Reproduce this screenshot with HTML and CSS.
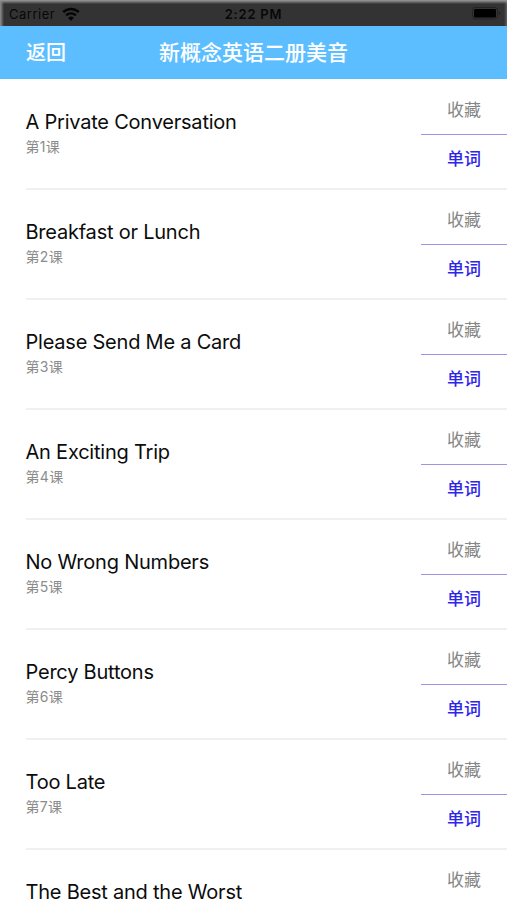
FILE: index.html
```html
<!DOCTYPE html>
<html lang="zh-CN">
<head>
  <meta charset="UTF-8">
  <meta name="viewport" content="width=device-width, initial-scale=1.0">
  <title>新概念英语二册美音</title>
  <link rel="stylesheet" href="styles.css">
</head>
<body>
  <div class="status-bar">
    <div class="carrier">
      <span>Carrier</span>
      <svg class="wifi" width="18" height="14" viewBox="0 0 18 14">
        <path d="M1.2 5.2a11.2 11.2 0 0 1 15.6 0" fill="none" stroke="#050505" stroke-width="2.5"/>
        <path d="M4.1 8.4a7 7 0 0 1 9.8 0" fill="none" stroke="#050505" stroke-width="2.3"/>
        <path d="M9 13.8L6.2 10.9a4 4 0 0 1 5.6 0z" fill="#050505"/>
      </svg>
    </div>
    <span class="time">2:22 PM</span>
    <div class="battery">
      <svg width="30" height="13" viewBox="0 0 30 13">
        <rect x="1.5" y="0.5" width="25" height="11.5" rx="2.5" fill="none" stroke="#242424"/>
        <rect x="3" y="2" width="22" height="8.5" rx="1.2" fill="#000"/>
        <path d="M27.8 4.2v4a2.1 2.1 0 0 0 0-4z" fill="#202020"/>
      </svg>
    </div>
  </div>

  <header class="nav-bar">
    <a class="back">返回</a>
    <h1 class="nav-title">新概念英语二册美音</h1>
  </header>

  <ul class="lesson-list">
    <li class="lesson">
      <div class="lesson-info">
        <h2>A Private Conversation</h2>
        <p>第1课</p>
      </div>
      <div class="lesson-actions">
        <a class="favorite">收藏</a>
        <a class="words">单词</a>
      </div>
    </li>
    <li class="lesson">
      <div class="lesson-info">
        <h2>Breakfast or Lunch</h2>
        <p>第2课</p>
      </div>
      <div class="lesson-actions">
        <a class="favorite">收藏</a>
        <a class="words">单词</a>
      </div>
    </li>
    <li class="lesson">
      <div class="lesson-info">
        <h2>Please Send Me a Card</h2>
        <p>第3课</p>
      </div>
      <div class="lesson-actions">
        <a class="favorite">收藏</a>
        <a class="words">单词</a>
      </div>
    </li>
    <li class="lesson">
      <div class="lesson-info">
        <h2>An Exciting Trip</h2>
        <p>第4课</p>
      </div>
      <div class="lesson-actions">
        <a class="favorite">收藏</a>
        <a class="words">单词</a>
      </div>
    </li>
    <li class="lesson">
      <div class="lesson-info">
        <h2>No Wrong Numbers</h2>
        <p>第5课</p>
      </div>
      <div class="lesson-actions">
        <a class="favorite">收藏</a>
        <a class="words">单词</a>
      </div>
    </li>
    <li class="lesson">
      <div class="lesson-info">
        <h2>Percy Buttons</h2>
        <p>第6课</p>
      </div>
      <div class="lesson-actions">
        <a class="favorite">收藏</a>
        <a class="words">单词</a>
      </div>
    </li>
    <li class="lesson">
      <div class="lesson-info">
        <h2>Too Late</h2>
        <p>第7课</p>
      </div>
      <div class="lesson-actions">
        <a class="favorite">收藏</a>
        <a class="words">单词</a>
      </div>
    </li>
    <li class="lesson lesson-last">
      <div class="lesson-info">
        <h2>The Best and the Worst</h2>
      </div>
      <div class="lesson-actions">
        <a class="favorite">收藏</a>
      </div>
    </li>
  </ul>
</body>
</html>
```
FILE: styles.css
```css
* {
  margin: 0;
  padding: 0;
  box-sizing: border-box;
}

body {
  height: 900px;
  display: flex;
  flex-direction: column;
  overflow: hidden;
  background: #fff;
  font-family: Inter, "Noto Sans CJK SC", sans-serif;
}

.status-bar {
  height: 26px;
  flex-shrink: 0;
  display: grid;
  grid-template-columns: 1fr auto 1fr;
  align-items: center;
  padding: 1px 6px 0 9px;
  background:
    linear-gradient(to bottom, #989898 0, #858585 1px, rgba(51, 51, 51, 0) 4px),
    linear-gradient(to right, #909090 0, rgba(51, 51, 51, 0) 4px),
    linear-gradient(to left, #606060 0, rgba(51, 51, 51, 0) 3px),
    #333;
  color: #080808;
  font-size: 13px;
  line-height: 20px;
}

.carrier {
  display: flex;
  align-items: center;
  gap: 7px;
  letter-spacing: 0.5px;
}

.time {
  margin-right: 3px;
  font-weight: 600;
  letter-spacing: 0.8px;
}

.battery {
  display: flex;
  justify-content: flex-end;
}

.nav-bar {
  height: 53px;
  flex-shrink: 0;
  display: grid;
  grid-template-columns: 1fr auto 1fr;
  align-items: center;
  padding: 0 26px;
  background: #5dbeff;
  color: #fff;
  font-size: 20px;
  font-weight: 500;
  line-height: 30px;
}

.nav-title {
  font-size: 21px;
  font-weight: 500;
}

.lesson-list {
  list-style: none;
}

.lesson {
  height: 110px;
  display: flex;
  justify-content: space-between;
  position: relative;
}

/* separator starts at the text inset */
.lesson::after {
  content: "";
  position: absolute;
  left: 26px;
  right: 0;
  bottom: -1px;
  height: 2px;
  background: #f0f0f0;
}

.lesson-last {
  height: 51px;
}

.lesson-last::after {
  display: none;
}

.lesson-info {
  padding: 30px 0 0 25.5px;
}

.lesson-info h2 {
  color: #0c0c0c;
  font-size: 20px;
  font-weight: 400;
  line-height: 27px;
  letter-spacing: -0.22px;
}

.lesson-last h2 {
  height: 21px;
}

.lesson-info p {
  color: #8c8c8c;
  font-size: 14px;
  line-height: 22px;
  letter-spacing: 0.3px;
}

.lesson-actions {
  width: 86px;
  font-size: 17px;
  text-align: center;
}

.lesson-actions a {
  display: block;
}

.favorite {
  height: 56px;
  padding-top: 7px;
  border-bottom: 1px solid #9c94e6;
  color: #858585;
  line-height: 48px;
}

.lesson-last .favorite {
  height: 51px;
  border-bottom: 0;
}

.words {
  color: #2d25e8;
  font-weight: 500;
  line-height: 48px;
}
```
